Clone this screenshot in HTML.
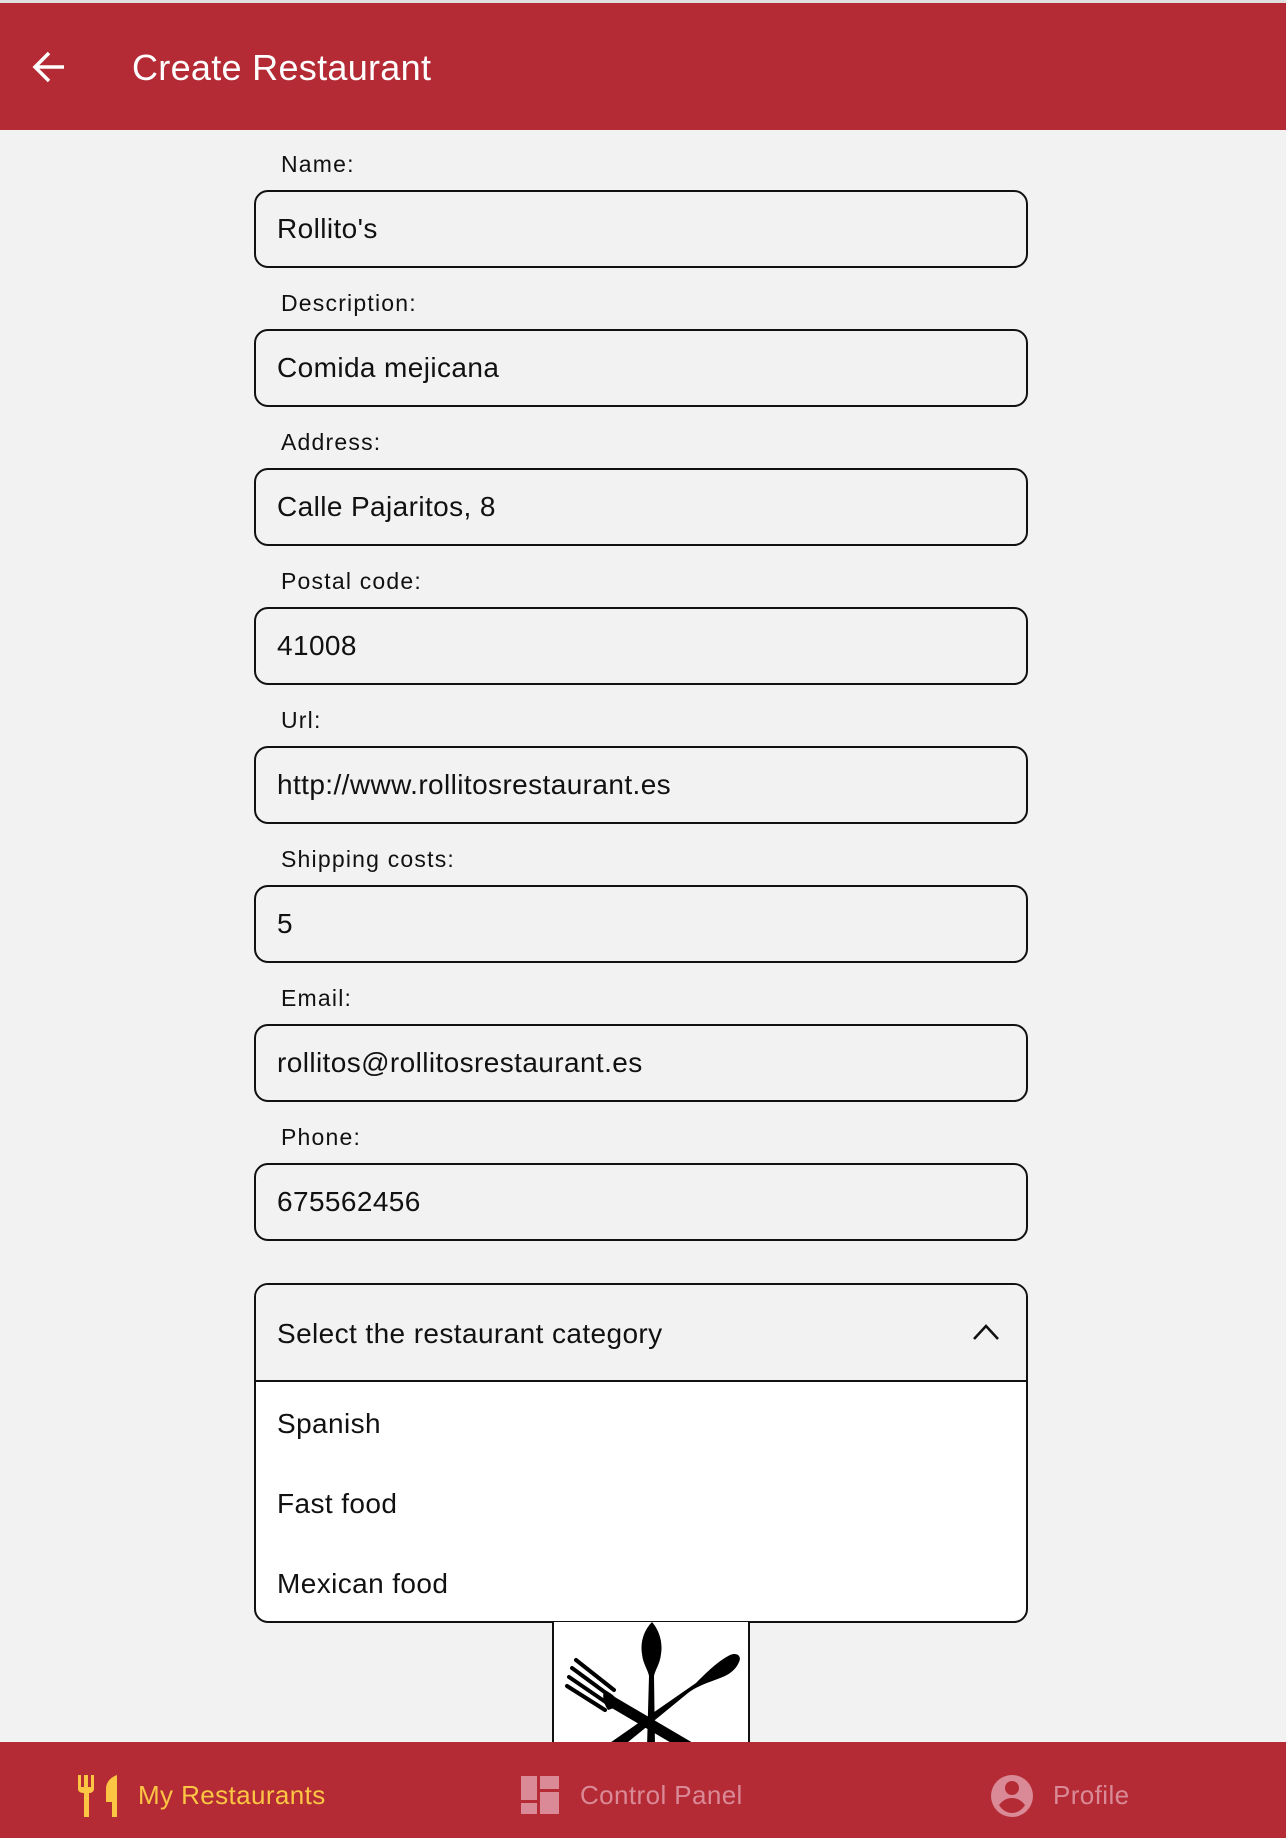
<!DOCTYPE html>
<html><head><meta charset="utf-8">
<style>
*{box-sizing:border-box;margin:0;padding:0}
body{width:1286px;height:1838px;background:#f2f2f2;font-family:"Liberation Sans",sans-serif;position:relative;overflow:hidden}
.top{position:absolute;left:0;top:0;width:1286px;height:3px;background:#e0e0e0}
.hdr{position:absolute;left:0;top:3px;width:1286px;height:127px;background:#b52b35}
.hdr h1{position:absolute;left:132px;top:44px;color:#fff;font-weight:normal;font-size:36px;letter-spacing:0.3px}
.lbl{position:absolute;left:281px;font-size:23px;color:#111;letter-spacing:1.2px}
.in{position:absolute;left:254px;width:774px;height:78px;border:2px solid #111;border-radius:14px;font-size:28px;color:#111;padding-left:21px;line-height:74px;letter-spacing:0.4px}
.dd{position:absolute;left:254px;top:1283px;width:774px;height:340px;border:2px solid #111;border-radius:14px;overflow:hidden;background:#fff}
.ddh{height:97px;background:#f2f2f2;border-bottom:2px solid #111;font-size:28px;line-height:97px;padding-left:21px;color:#111;position:relative;letter-spacing:0.4px}
.it{position:absolute;left:21px;font-size:28px;color:#111;letter-spacing:0.4px}
.img{position:absolute;left:552px;top:1622px;width:198px;height:125px;background:#fff;border-left:2px solid #111;border-right:2px solid #111}
.bar{position:absolute;left:0;top:1742px;width:1286px;height:96px;background:#b52b35}
.bt{position:absolute;top:38px;font-size:26px;letter-spacing:0.4px}
</style></head><body>
<div class="top"></div>
<div class="hdr">
<svg style="position:absolute;left:32px;top:47px" width="34" height="34" viewBox="0 0 34 34"><path d="M32 17H4M17 3L3 17l14 14" fill="none" stroke="#fff" stroke-width="3.5"/></svg>
<h1>Create Restaurant</h1>
</div>

<div class="lbl" style="top:151px">Name:</div>
<div class="in" style="top:190px">Rollito's</div>
<div class="lbl" style="top:290px">Description:</div>
<div class="in" style="top:329px">Comida mejicana</div>
<div class="lbl" style="top:429px">Address:</div>
<div class="in" style="top:468px">Calle Pajaritos, 8</div>
<div class="lbl" style="top:568px">Postal code:</div>
<div class="in" style="top:607px">41008</div>
<div class="lbl" style="top:707px">Url:</div>
<div class="in" style="top:746px">http://www.rollitosrestaurant.es</div>
<div class="lbl" style="top:846px">Shipping costs:</div>
<div class="in" style="top:885px">5</div>
<div class="lbl" style="top:985px">Email:</div>
<div class="in" style="top:1024px">rollitos@rollitosrestaurant.es</div>
<div class="lbl" style="top:1124px">Phone:</div>
<div class="in" style="top:1163px">675562456</div>

<div class="dd">
<div class="ddh">Select the restaurant category
<svg style="position:absolute;right:26px;top:38px" width="28" height="18" viewBox="0 0 28 18"><path d="M2 16L14 3l12 13" fill="none" stroke="#111" stroke-width="2.5"/></svg>
</div>
<div class="it" style="top:123px">Spanish</div>
<div class="it" style="top:203px">Fast food</div>
<div class="it" style="top:283px">Mexican food</div>
</div>

<div class="img">
<svg width="194" height="125" viewBox="0 0 194 125">
<path d="M98 0C90 8 86 20 88 32c1 10 6 16 7 22l-2 71h8l-1-71c1-6 6-12 7-22 2-12-2-24-9-32z" fill="#000"/>
<path d="M185 40c3-6-2-10-9-7-12 6-24 18-34 28L50 125h18l66-54c12-9 26-12 37-17 8-4 12-9 14-14z" fill="#000"/>
<g stroke="#000" stroke-linecap="round" fill="none">
<path d="M22 38l38 30M18 46l38 28M15 55l38 26M13 64l38 24" stroke-width="4"/>
<path d="M55 78l80 47" stroke-width="11"/>
</g>
<path d="M50 68c6 2 14 8 16 16l-12 4c-4-6-6-12-4-20z" fill="#000"/>
</svg>
</div>

<div class="bar">
<svg style="position:absolute;left:78px;top:33px" width="40" height="42" viewBox="0 0 40 42"><path d="M0 0h3v12h3V0h4v12h3V0h3v14c0 2-2 4-4 4h-1v24H6V18H5c-3 0-5-2-5-4z M39 0v42h-5V27h-6V14c0-7 5-12 11-14z" fill="#fcc543"/></svg>
<div class="bt" style="left:138px;color:#fcc543">My Restaurants</div>
<svg style="position:absolute;left:521px;top:34px" width="38" height="38" viewBox="0 0 38 38"><path d="M0 0h16v24H0zM19 0h19v13H19zM0 27h16v11H0zM19 16h19v22H19z" fill="#d98a96"/></svg>
<div class="bt" style="left:580px;color:#d98a96">Control Panel</div>
<svg style="position:absolute;left:991px;top:33px" width="42" height="42" viewBox="0 0 42 42"><circle cx="21" cy="21" r="21" fill="#d98a96"/><circle cx="21" cy="13" r="7" fill="#b52b35"/><path d="M8 30c4-5 8-7 13-7s9 2 13 7c-3 5-8 8-13 8s-10-3-13-8z" fill="#b52b35"/></svg>
<div class="bt" style="left:1053px;color:#d98a96">Profile</div>
</div>
</body></html>
